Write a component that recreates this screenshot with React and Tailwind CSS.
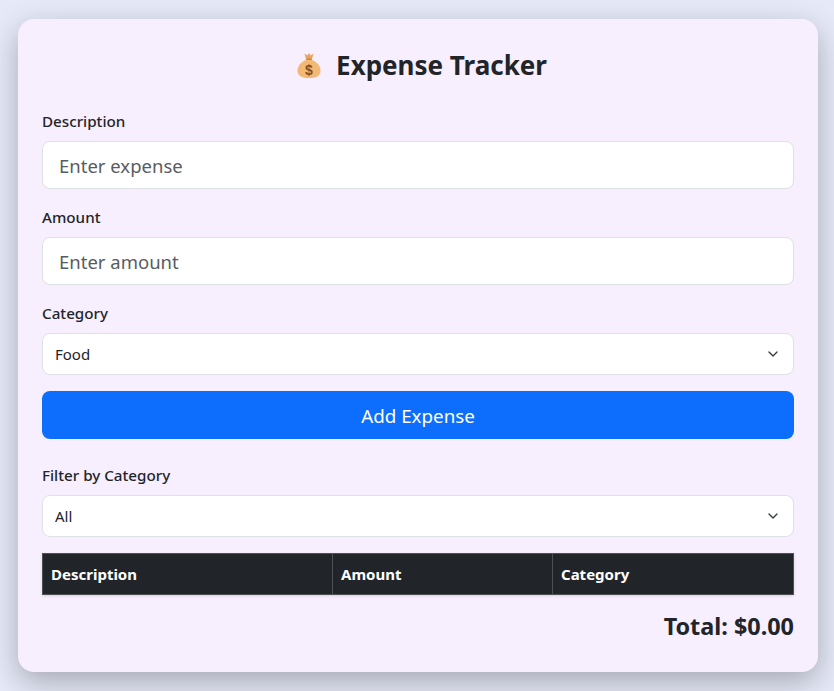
import React from "react";
import { ChevronDown } from "lucide-react";

const MoneyBag = () => (
  <svg width="28" height="28" viewBox="0 0 28 28" className="shrink-0">
    <path d="M9.5 2.5 L12.5 4.5 L14 2 L15.5 4.5 L18.5 2.5 L17 8 H11 Z" fill="#e8a45c" />
    <rect x="11" y="7.5" width="6" height="2" rx="1" fill="#c98a4a" />
    <path d="M11 9 C6 11 2.5 15 2.5 19.5 C2.5 24.5 6 27 14 27 C22 27 25.5 24.5 25.5 19.5 C25.5 15 22 11 17 9 Z" fill="#f3b874" />
    <text x="14" y="23.5" textAnchor="middle" fontSize="14" fontFamily="'Liberation Sans', sans-serif" fill="#7d4f24">$</text>
  </svg>
);

const Label = ({ children }) => (
  <label className="block mb-2 text-[15.2px] leading-[24px] font-medium text-[#212529]">{children}</label>
);

const SelectBox = ({ value, options }) => (
  <div className="relative">
    <select
      defaultValue={value}
      className="block w-full h-[42px] appearance-none rounded-lg border border-[#dee2e6] bg-white pl-3 pr-9 text-[15px] text-[#212529]"
    >
      {options.map((o) => (
        <option key={o}>{o}</option>
      ))}
    </select>
    <ChevronDown size={16} strokeWidth={2} className="absolute right-[13px] top-[13px] text-[#343a40] pointer-events-none" />
  </div>
);

const App = () => {
  return (
    <div
      className="h-screen overflow-hidden flex items-center pl-[18px] bg-[#e6e9f8]"
      style={{ fontFamily: "'Noto Sans', 'Open Sans', sans-serif" }}
    >
      <div className="w-[800px] h-[653px] rounded-2xl bg-[#f7eefe] px-6 pt-6 shadow-[0_10px_30px_rgba(0,0,0,0.28)]">
        <h2 className="flex items-center justify-center gap-[13px] h-[44px] mb-[22px] pl-[6px] text-[26px] font-bold text-[#212529]">
          <MoneyBag />
          Expense Tracker
        </h2>

        <div className="mb-4">
          <Label>Description</Label>
          <input
            placeholder="Enter expense"
            className="block w-full h-12 rounded-lg border border-[#dee2e6] bg-white px-4 text-[18.5px] text-[#212529] placeholder:text-[#595c5f]"
          />
        </div>
        <div className="mb-4">
          <Label>Amount</Label>
          <input
            placeholder="Enter amount"
            className="block w-full h-12 rounded-lg border border-[#dee2e6] bg-white px-4 text-[18.5px] text-[#212529] placeholder:text-[#595c5f]"
          />
        </div>
        <div className="mb-4">
          <Label>Category</Label>
          <SelectBox value="Food" options={["Food", "Transport", "Shopping", "Other"]} />
        </div>
        <button className="block w-full h-12 pt-0.5 rounded-lg bg-[#0d6efd] text-[18.8px] text-white mb-6">Add Expense</button>

        <div className="mb-4">
          <Label>Filter by Category</Label>
          <SelectBox value="All" options={["All", "Food", "Transport", "Shopping", "Other"]} />
        </div>

        <table className="w-full table-fixed border-collapse shadow-sm">
          <thead>
            <tr className="h-[41px] bg-[#212529] text-white text-[15px] font-bold text-left">
              <th className="w-[290px] px-2 border border-[#4d5154]">Description</th>
              <th className="w-[220px] px-2 border border-[#4d5154]">Amount</th>
              <th className="px-2 border border-[#4d5154]">Category</th>
            </tr>
          </thead>
          <tbody />
        </table>

        <h4 className="mt-4 text-right text-[23.4px] leading-[30px] font-bold text-[#212529]">Total: $0.00</h4>
      </div>
    </div>
  );
};

export default App;
